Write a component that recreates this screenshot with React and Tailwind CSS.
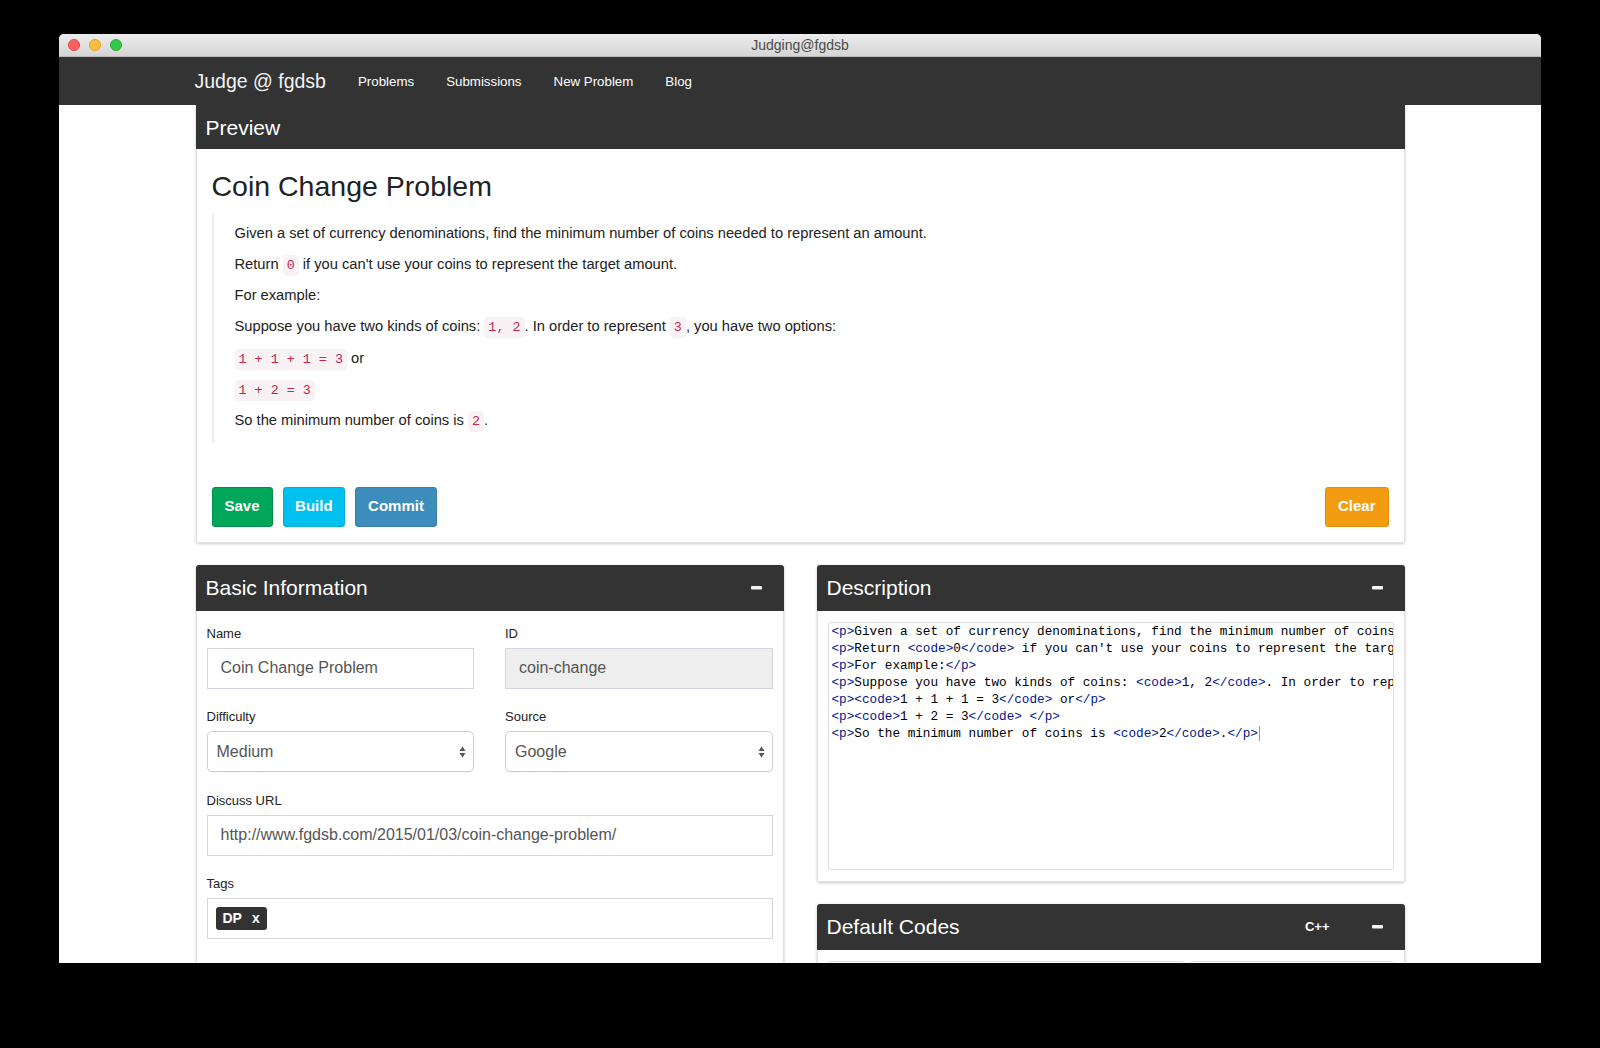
import React from 'react';

const sans = { fontFamily: '"Liberation Sans", Arial, sans-serif' };
const mono = { fontFamily: '"Liberation Mono", "Courier New", monospace' };

function Code({ children }) {
  return (
    <code className="px-[4px] py-[3px] rounded-[4px] bg-[#f9f2f4] text-[#c7254e] text-[13.4px] leading-none" style={mono}>
      {children}
    </code>
  );
}

function MinusIcon() {
  return (
    <svg width="11" height="4" viewBox="0 0 11 4" className="block">
      <rect x="0" y="0" width="11" height="3.5" rx="0.8" fill="#f2f2f2" />
    </svg>
  );
}

function BoxHeader({ title, extra }) {
  return (
    <div className="h-[46px] bg-[#333333] rounded-t-[3px] flex items-center px-[10px]">
      <h3 className="text-[21px] text-white leading-none flex-1">{title}</h3>
      {extra && <span className="text-[13px] font-bold text-white mr-[42px]">{extra}</span>}
      <span className="mr-[12px]"><MinusIcon /></span>
    </div>
  );
}

function SelectArrows() {
  return (
    <svg width="7" height="12" viewBox="0 0 7 12" className="block">
      <path d="M3.5 0.5 L6.5 5 L0.5 5 Z" fill="#555" />
      <path d="M3.5 11.5 L6.5 7 L0.5 7 Z" fill="#555" />
    </svg>
  );
}

function Field({ label, children }) {
  return (
    <div className="mb-[19.5px]">
      <label className="block text-[13px] leading-[18px] mb-[5px] text-[#222]">{label}</label>
      {children}
    </div>
  );
}

function TextInput({ value, disabled }) {
  return (
    <div className={`h-[41px] border border-[#d2d6de] flex items-center pl-[13px] text-[16px] text-[#555] ${disabled ? 'bg-[#eeeeee]' : 'bg-white'}`}>
      {value}
    </div>
  );
}

function Select({ value }) {
  return (
    <div className="h-[41px] border border-[#cfcfcf] rounded-[5px] flex items-center justify-between pl-[9px] pr-[7px] text-[16px] text-[#555] bg-white shadow-[0_1px_1px_rgba(0,0,0,0.05)]">
      <span>{value}</span>
      <SelectArrows />
    </div>
  );
}

const T = ({ children }) => <span className="text-[#00168e]">{children}</span>;

const codeLines = [
  <><T>&lt;p&gt;</T>Given a set of currency denominations, find the minimum number of coins needed to represent an amount.<T>&lt;/p&gt;</T></>,
  <><T>&lt;p&gt;</T>Return <T>&lt;code&gt;</T>0<T>&lt;/code&gt;</T> if you can't use your coins to represent the target amount.<T>&lt;/p&gt;</T></>,
  <><T>&lt;p&gt;</T>For example:<T>&lt;/p&gt;</T></>,
  <><T>&lt;p&gt;</T>Suppose you have two kinds of coins: <T>&lt;code&gt;</T>1, 2<T>&lt;/code&gt;</T>. In order to represent <T>&lt;code&gt;</T>3<T>&lt;/code&gt;</T>, you have two options:<T>&lt;/p&gt;</T></>,
  <><T>&lt;p&gt;&lt;code&gt;</T>1 + 1 + 1 = 3<T>&lt;/code&gt;</T> or<T>&lt;/p&gt;</T></>,
  <><T>&lt;p&gt;&lt;code&gt;</T>1 + 2 = 3<T>&lt;/code&gt;</T> <T>&lt;/p&gt;</T></>,
  <><T>&lt;p&gt;</T>So the minimum number of coins is <T>&lt;code&gt;</T>2<T>&lt;/code&gt;</T>.<T>&lt;/p&gt;</T><span className="inline-block w-px h-[15px] bg-[#999] align-middle ml-[1px]" /></>,
];

export default function App() {
  return (
    <div className="w-[1600px] h-[1048px] bg-black overflow-hidden pt-[34px] pl-[59px]" style={sans}>
      <div className="w-[1482px] h-[929px] bg-white rounded-t-[5px] overflow-hidden flex flex-col">
        {/* title bar */}
        <div className="h-[23px] shrink-0 grid grid-cols-[1fr_auto_1fr] items-center bg-gradient-to-b from-[#ececec] to-[#d5d5d5] border-b border-[#b8b8b8]">
          <div className="flex items-center gap-[9px] pl-[9px]">
            <span className="w-[12px] h-[12px] rounded-full bg-[#fc605c] border border-[#e2463f]" />
            <span className="w-[12px] h-[12px] rounded-full bg-[#fdbc40] border border-[#e1a116]" />
            <span className="w-[12px] h-[12px] rounded-full bg-[#34c84a] border border-[#2dac2f]" />
          </div>
          <div className="text-[14px] text-[#4a4a4a] pt-[1px]">Judging@fgdsb</div>
          <div />
        </div>

        {/* navbar */}
        <div className="h-[48px] shrink-0 bg-[#333333]">
          <div className="w-[1209px] mx-auto h-full flex items-center pt-[1px]">
            <span className="text-[19.5px] text-[#f4f4f4] -ml-[1px] mr-[32px]">Judge @ fgdsb</span>
            <nav className="flex items-center gap-[32px] text-[13.3px] text-white">
              <span>Problems</span>
              <span>Submissions</span>
              <span>New Problem</span>
              <span>Blog</span>
            </nav>
          </div>
        </div>

        <main className="w-[1209px] mx-auto flex-1">
          {/* Preview */}
          <section className="shadow-[0_1px_3px_rgba(0,0,0,0.22)] rounded-b-[3px]">
            <div className="h-[44px] bg-[#333333] flex items-center px-[10px]">
              <h2 className="text-[21px] text-white leading-none">Preview</h2>
            </div>
            <div className="border-x border-b border-[#e2e2e2] px-[15px] pt-[22px] pb-[15px] text-[#222]">
              <h1 className="text-[28.5px] leading-[31px] text-[#222] mb-[11.5px]">Coin Change Problem</h1>
              <blockquote className="border-l-[2px] border-[#eeeeee] pl-[21px] pt-[9px] pb-[1px] text-[14.7px] leading-[21px]">
                <p className="h-[21px] mb-[10.3px]">Given a set of currency denominations, find the minimum number of coins needed to represent an amount.</p>
                <p className="h-[21px] mb-[10.3px]">Return <Code>0</Code> if you can't use your coins to represent the target amount.</p>
                <p className="h-[21px] mb-[10.3px]">For example:</p>
                <p className="h-[21px] mb-[10.3px]">Suppose you have two kinds of coins: <Code>1, 2</Code>. In order to represent <Code>3</Code>, you have two options:</p>
                <p className="h-[21px] mb-[10.3px]"><Code>1 + 1 + 1 = 3</Code> or</p>
                <p className="h-[21px] mb-[10.3px]"><Code>1 + 2 = 3</Code></p>
                <p className="h-[21px] mb-[10.3px]">So the minimum number of coins is <Code>2</Code>.</p>
              </blockquote>
              <div className="mt-[44px] flex items-center justify-between">
                <div className="flex items-center gap-[10px]">
                  <button className="h-[40px] px-[12px] rounded-[3px] bg-[#00a65a] border border-[#008d4c] text-white font-bold text-[15px]">Save</button>
                  <button className="h-[40px] px-[11.5px] rounded-[3px] bg-[#00c0ef] border border-[#00acd6] text-white font-bold text-[15px]">Build</button>
                  <button className="h-[40px] px-[12px] rounded-[3px] bg-[#3c8dbc] border border-[#367fa9] text-white font-bold text-[15px]">Commit</button>
                </div>
                <button className="h-[40px] px-[12px] rounded-[3px] bg-[#f39c12] border border-[#e08e0b] text-white font-bold text-[15px]">Clear</button>
              </div>
            </div>
          </section>

          <div className="mt-[22px] grid grid-cols-2 gap-[33px] items-start">
            {/* Basic Information */}
            <section className="shadow-[0_1px_3px_rgba(0,0,0,0.2)]">
              <BoxHeader title="Basic Information" />
              <div className="border-x border-b border-[#e2e2e2] px-[10px] pt-[14px] pb-[120px]">
                <div className="grid grid-cols-2 gap-x-[31px]">
                  <Field label="Name"><TextInput value="Coin Change Problem" /></Field>
                  <Field label="ID"><TextInput value="coin-change" disabled /></Field>
                  <Field label="Difficulty"><Select value="Medium" /></Field>
                  <Field label="Source"><Select value="Google" /></Field>
                </div>
                <Field label="Discuss URL"><TextInput value="http://www.fgdsb.com/2015/01/03/coin-change-problem/" /></Field>
                <Field label="Tags">
                  <div className="h-[41px] border border-[#d2d6de] flex items-center pl-[8px]">
                    <span className="h-[23px] px-[7px] rounded-[3px] bg-[#333333] text-white font-bold text-[14px] flex items-center gap-[10px]">
                      <span>DP</span><span>x</span>
                    </span>
                  </div>
                </Field>
              </div>
            </section>

            <div>
              {/* Description */}
              <section className="shadow-[0_1px_3px_rgba(0,0,0,0.22)] rounded-b-[3px]">
                <BoxHeader title="Description" />
                <div className="border-x border-b border-[#e2e2e2] px-[10px] pt-[11px] pb-[11px]">
                  <div className="h-[248px] border border-[#dddddd] rounded-[3px] overflow-hidden pl-[3px] text-[12.7px] leading-[17px] text-black whitespace-pre" style={mono}>
                    {codeLines.map((l, i) => (
                      <div key={i} className="h-[17px]">{l}</div>
                    ))}
                  </div>
                </div>
              </section>

              {/* Default Codes */}
              <section className="mt-[22px] shadow-[0_1px_3px_rgba(0,0,0,0.22)]">
                <BoxHeader title="Default Codes" extra="C++" />
                <div className="border-x border-b border-[#e2e2e2] px-[10px] pt-[11px] pb-[11px] flex gap-[5px]">
                  <div className="w-[357px] h-[300px] border border-[#dddddd] rounded-[3px]" />
                  <div className="flex-1 h-[300px] border border-[#dddddd] rounded-[3px]" />
                </div>
              </section>
            </div>
          </div>
        </main>
      </div>
    </div>
  );
}
